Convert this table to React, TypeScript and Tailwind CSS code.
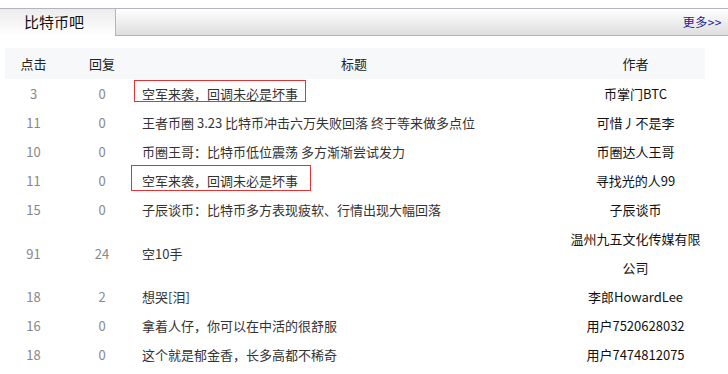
import React from 'react'

type Row = {
  clicks: number
  replies: number
  title: string
  author: string
  mark?: 'a' | 'b'
}

const rows: Row[] = [
  { clicks: 3, replies: 0, title: '空军来袭，回调未必是坏事', author: '币掌门BTC', mark: 'a' },
  { clicks: 11, replies: 0, title: '王者币圈 3.23 比特币冲击六万失败回落 终于等来做多点位', author: '可惜丿不是李' },
  { clicks: 10, replies: 0, title: '币圈王哥：比特币低位震荡 多方渐渐尝试发力', author: '币圈达人王哥' },
  { clicks: 11, replies: 0, title: '空军来袭，回调未必是坏事', author: '寻找光的人99', mark: 'b' },
  { clicks: 15, replies: 0, title: '子辰谈币：比特币多方表现疲软、行情出现大幅回落', author: '子辰谈币' },
  { clicks: 91, replies: 24, title: '空10手', author: '温州九五文化传媒有限公司' },
  { clicks: 18, replies: 2, title: '想哭[泪]', author: '李郎HowardLee' },
  { clicks: 16, replies: 0, title: '拿着人仔，你可以在中活的很舒服', author: '用户7520628032' },
  { clicks: 18, replies: 0, title: '这个就是郁金香，长多高都不稀奇', author: '用户7474812075' },
]

export default function App() {
  return (
    <div
      className="w-[728px] h-[374px] bg-white overflow-hidden pt-2"
      style={{ fontFamily: '"Noto Sans CJK SC", "Noto Sans", sans-serif' }}
    >
      {/* Tab bar */}
      <div className="border-t border-[#b4b2c9] flex h-[28px]">
        <div className="w-[116px] border-r border-[#b4b2c9] bg-gradient-to-b from-[#ececec] to-white flex items-center pl-[24px] text-[15px] text-[#111]">
          比特币吧
        </div>
        <div className="flex-1 border-b border-[#b4b2c9] bg-gradient-to-b from-white to-[#dedede] flex items-center justify-end pr-[6px]">
          <span className="text-[12px] text-[#1a1aa0] tracking-[0.5px]">更多&gt;&gt;</span>
        </div>
      </div>

      {/* Table */}
      <div className="mt-[12px] ml-[5px] w-[700px] text-[13px]">
        <div className="flex h-[31px] items-center bg-[#f7f8fa] text-[#222]">
          <div className="w-[57px] text-center">点击</div>
          <div className="w-[80px] text-center">回复</div>
          <div className="w-[424px] text-center">标题</div>
          <div className="w-[139px] text-center">作者</div>
        </div>
        {rows.map((r, i) => (
          <div key={i} className="flex items-center leading-[29px]">
            <div className="w-[57px] text-center text-[#888]">{r.clicks}</div>
            <div className="w-[80px] text-center text-[#888]">{r.replies}</div>
            <div className="w-[424px] pl-[0px] text-[#333] relative whitespace-nowrap">
              {r.title}
              {r.mark === 'a' && (
                <span className="absolute left-[-8px] top-[1px] w-[172px] h-[22px] border border-[#e23434]" />
              )}
              {r.mark === 'b' && (
                <span className="absolute left-[-11px] top-[-1px] w-[180px] h-[26px] border border-[#e23434]" />
              )}
            </div>
            <div className="w-[139px] text-center text-[#111] px-[3px]">{r.author}</div>
          </div>
        ))}
      </div>
    </div>
  )
}
